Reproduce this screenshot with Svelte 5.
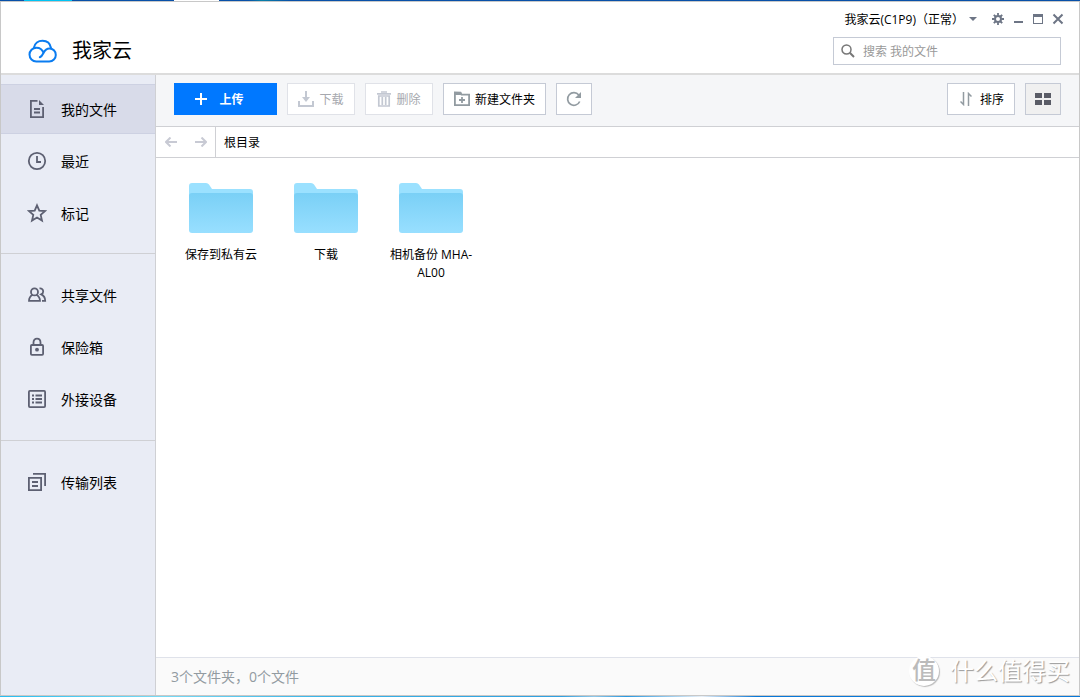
<script>
    let query = '';
    let current = '我的文件';

    const groups = [
        [
            { name: '我的文件', icon: 'file' },
            { name: '最近', icon: 'clock' },
            { name: '标记', icon: 'star' }
        ],
        [
            { name: '共享文件', icon: 'users' },
            { name: '保险箱', icon: 'lock' },
            { name: '外接设备', icon: 'device' }
        ],
        [{ name: '传输列表', icon: 'transfer' }]
    ];

    const folders = ['保存到私有云', '下载', '相机备份 MHA-AL00'];
</script>

<div class="desktop">
    <div class="window">
        <header>
            <div class="brand">
                <svg width="30" height="24" viewBox="0 0 30 24" fill="none" stroke="#0a7cf0" stroke-width="2" stroke-linecap="round">
                    <path d="M6 8.500C6.800 4.500 10.200 1.700 14.500 1.700s7.700 2.800 8.500 7.300" />
                    <path d="M15.500 13.800C14.300 10.600 11.800 8.700 8.500 8.700c-4 0-7 3-7 6.900 0 3.800 3 6.800 6.800 6.800h12.900c3.800 0 6.600-2.900 6.600-6.500 0-3.700-2.900-6.400-6.300-6.400-6.700 0-5 6.900-9.700 8.700" />
                </svg>
                <h1>我家云</h1>
            </div>
            <div class="tools">
                <div class="controls">
                    <button class="account">
                        我家云(C1P9)（正常）
                        <svg width="8" height="4" viewBox="0 0 8 4"><path d="M0 0h8L4 4z" fill="#6d7585" /></svg>
                    </button>
                    <button aria-label="设置">
                        <svg width="12" height="12" viewBox="0 0 12 12" fill="none" stroke="#6d7585">
                            <path d="M6 0v2.500M6 9.500V12M0 6h2.500M9.500 6H12M1.800 1.800l1.700 1.700M8.500 8.500l1.700 1.700M1.800 10.200l1.700-1.700M8.500 3.500l1.700-1.700" stroke-width="1.800" />
                            <circle cx="6" cy="6" r="3" stroke-width="2" />
                        </svg>
                    </button>
                    <button aria-label="最小化">
                        <svg width="12" height="12" viewBox="0 0 12 12"><path d="M2 8h9v2H2z" fill="#6d7585" /></svg>
                    </button>
                    <button aria-label="最大化">
                        <svg width="12" height="12" viewBox="0 0 12 12"><path d="M1 1h10v10H1zM2 4v6h8V4z" fill="#6d7585" fill-rule="evenodd" /></svg>
                    </button>
                    <button aria-label="关闭">
                        <svg width="12" height="12" viewBox="0 0 12 12"><path d="M1.500 1.500l9 9M10.500 1.500l-9 9" stroke="#6d7585" stroke-width="2" /></svg>
                    </button>
                </div>
                <label class="search">
                    <svg width="14" height="14" viewBox="0 0 14 14" fill="none" stroke="#777">
                        <circle cx="5.500" cy="5.500" r="4.500" stroke-width="1.500" />
                        <path d="M8.800 8.800L13 13" stroke-width="2" />
                    </svg>
                    <input type="text" aria-label="搜索" placeholder="搜索 我的文件" bind:value={query} />
                </label>
            </div>
        </header>

        <div class="body">
            <nav class="sidebar">
                {#each groups as group}
                    <ul>
                        {#each group as item}
                            <li>
                                <button class:active={current === item.name} on:click={() => (current = item.name)}>
                                    <svg width="20" height="20" viewBox="0 0 20 20" fill="none" stroke="#5d6072" stroke-width="1.800">
                                        {#if item.icon === 'file'}
                                            <path d="M10.500 1.900H3.900v16.200h12.200V8M7 10h6M7 13.500h6" />
                                            <path d="M12 1l5 5h-5z" fill="#5d6072" stroke="none" />
                                        {:else if item.icon === 'clock'}
                                            <circle cx="10" cy="10" r="8.200" />
                                            <path d="M10 5v6h4" />
                                        {:else if item.icon === 'star'}
                                            <path d="M10 2.300l2.300 5.300 5.700.5-4.300 3.800 1.300 5.700-5-3-5 3 1.300-5.700L2 8.100l5.700-.5z" />
                                        {:else if item.icon === 'users'}
                                            <circle cx="7.500" cy="6.900" r="3.500" />
                                            <path d="M5.600 9.800C3.500 11 2 12.500 2 15.900h11c0-3.400-1.500-4.900-3.600-6.100M12.500 3.400c2.300-.3 3.700 1.200 3.700 3 0 1.400-.8 2.400-2 3 2.300 1 4 3 4 6.500H15" />
                                        {:else if item.icon === 'lock'}
                                            <rect x="3.900" y="8" width="12.200" height="9.800" rx="1" />
                                            <path d="M6.500 8V5.500C6.500 3.200 8 1.700 10 1.700s3.500 1.500 3.500 3.800V8" />
                                            <circle cx="10" cy="12.700" r="1.900" fill="#5d6072" stroke="none" />
                                        {:else if item.icon === 'device'}
                                            <rect x="1.900" y="1.900" width="16.200" height="16.200" rx="1" />
                                            <path d="M5 6.500h2M8.500 6.500H15M5 10h2M8.500 10H15M5 13.500h2M8.500 13.500H15" />
                                        {:else}
                                            <path d="M1.900 5.900h12.200v12.200H1.900zM5 10h6M5 14h6M6 1.900h12.100V14" />
                                        {/if}
                                    </svg>
                                    {item.name}
                                </button>
                            </li>
                        {/each}
                    </ul>
                {/each}
            </nav>

            <main>
                <div class="toolbar">
                    <button class="btn wide primary">
                        <svg width="12" height="12" viewBox="0 0 12 12"><path d="M6 0v12M0 6h12" stroke="#fff" stroke-width="2" /></svg>
                        上传
                    </button>
                    <button class="btn" disabled>
                        <svg width="16" height="16" viewBox="0 0 16 16" fill="none" stroke="#c3c8d2" stroke-width="2">
                            <path d="M1 10v5h14v-5M8 0v8" />
                            <path d="M4 6h8l-4 5z" fill="#c3c8d2" stroke="none" />
                        </svg>
                        下载
                    </button>
                    <button class="btn" disabled>
                        <svg width="14" height="16" viewBox="0 0 14 16" fill="none" stroke="#c3c8d2" stroke-width="1.700">
                            <path d="M0 2.800h14M4 1h6M1.800 5v10h10.400V5zM5.300 6v8M8.700 6v8" />
                        </svg>
                        删除
                    </button>
                    <button class="btn wide">
                        <svg width="16" height="16" viewBox="0 0 16 16" fill="none" stroke="#929ba1" stroke-width="1.800">
                            <path d="M.9 1.500v12.600h14.200V3.700H7.500l-1-2z" />
                            <path d="M1 1h6l1 3H1z" fill="#929ba1" stroke="none" />
                            <path d="M8 6v6M5 9h6" />
                        </svg>
                        新建文件夹
                    </button>
                    <button class="btn square" aria-label="刷新">
                        <svg width="16" height="16" viewBox="0 0 16 16" fill="none" stroke="#929ba1" stroke-width="1.700">
                            <path d="M13.700 10.500A6.300 6.300 0 1 1 12.800 4" />
                            <path d="M15 1v6H9z" fill="#929ba1" stroke="none" />
                        </svg>
                    </button>
                    <span class="spacer"></span>
                    <button class="btn sort">
                        <svg width="12" height="14" viewBox="0 0 12 14" fill="none" stroke="#929ba1" stroke-width="1.500">
                            <path d="M3.500 0v12.500L.5 9.500M8.500 14V1.500l3 3" />
                        </svg>
                        排序
                    </button>
                    <button class="btn square view" aria-label="视图">
                        <svg width="16" height="12" viewBox="0 0 16 12"><path d="M0 0h7v5H0zM9 0h7v5H9zM0 7h7v5H0zM9 7h7v5H9z" fill="#5a5c66" /></svg>
                    </button>
                </div>

                <div class="path">
                    <div class="history">
                        <button aria-label="后退" disabled>
                            <svg width="12" height="10" viewBox="0 0 12 10" fill="none" stroke="#c8cad4" stroke-width="2"><path d="M12 5H1M5.500.5L1 5l4.500 4.500" /></svg>
                        </button>
                        <button aria-label="前进" disabled>
                            <svg width="12" height="10" viewBox="0 0 12 10" fill="none" stroke="#c8cad4" stroke-width="2"><path d="M0 5h11M6.500.5L11 5 6.500 9.500" /></svg>
                        </button>
                    </div>
                    <a href="#root">根目录</a>
                </div>

                <div class="files">
                    {#each folders as folder}
                        <button class="folder">
                            <svg width="64" height="50" viewBox="0 0 64 50">
                                <defs>
                                    <linearGradient id="front" x1="0" y1="0" x2="0" y2="1">
                                        <stop offset="0" stop-color="#7ad0f6" />
                                        <stop offset="1" stop-color="#98dfff" />
                                    </linearGradient>
                                </defs>
                                <path d="M0 3a3 3 0 0 1 3-3h14q2 0 3 1.500L23 6h38a3 3 0 0 1 3 3v12H0z" fill="#9be1ff" />
                                <path d="M0 13a3 3 0 0 1 3-3h58a3 3 0 0 1 3 3v34a3 3 0 0 1-3 3H3a3 3 0 0 1-3-3z" fill="url(#front)" />
                            </svg>
                            <span>{folder}</span>
                        </button>
                    {/each}
                </div>

                <footer>3个文件夹，0个文件</footer>
            </main>
        </div>
    </div>

    <div class="watermark">
        <span class="seal">值</span>
        <span>什么值得买</span>
    </div>
</div>

<style>
    :global(body) {
        font-family: "Open Sans", "Noto Sans CJK SC", sans-serif;
        font-size: 12px;
        color: #000;
    }

    .desktop {
        position: relative;
        display: flex;
        box-sizing: border-box;
        min-height: 100vh;
        padding: 1px 0;
        background:
            linear-gradient(90deg, #0850a8 24px, #00c4f4 24px 72px, #0850a8 72px 174px, #fff 174px 219px, #0850a8 219px 248px, #0880a8 262px, #0850a8 290px) top / 100% 1px no-repeat,
            linear-gradient(90deg, #28bdf0, #78daf4 15%, #38b4e8 30%, #30a0e0 52%, #90c8e8 55%, #2898e0 58%, #e8f0f8 65%, #0878d8 70%, #0878d8) bottom / 100% 1px no-repeat;
    }

    .window {
        flex: 1;
        display: flex;
        flex-direction: column;
        border: 1px solid #c8c8c8;
        background: #fff;
    }

    button,
    input {
        margin: 0;
        padding: 0;
        border: 0;
        background: none;
        font: inherit;
        color: inherit;
    }

    svg {
        display: block;
        flex: none;
    }

    header {
        display: flex;
        justify-content: space-between;
        padding: 8px 18px 8px 27px;
        border-bottom: 2px solid #dcdcdc;
    }

    .brand {
        display: flex;
        align-items: center;
        align-self: flex-end;
        gap: 14px;
    }

    h1 {
        margin: 0;
        font-size: 20px;
        line-height: 28px;
        font-weight: 400;
    }

    .tools {
        display: flex;
        flex-direction: column;
        align-items: flex-end;
        gap: 9px;
    }

    .controls {
        display: flex;
        align-items: center;
        gap: 8px;
        height: 18px;
        margin-right: -3px;
    }

    .account {
        display: flex;
        align-items: center;
        gap: 5px;
        margin-right: 7px;
    }

    .search {
        display: flex;
        align-items: center;
        gap: 8px;
        box-sizing: border-box;
        width: 228px;
        height: 28px;
        padding: 0 7px;
        border: 1px solid #c5cad5;
    }

    .search input {
        flex: 1;
        min-width: 0;
        outline: none;
    }

    .search input::placeholder {
        color: #999;
        opacity: 1;
    }

    .body {
        flex: 1;
        display: flex;
    }

    .sidebar {
        width: 154px;
        border-right: 1px solid #cfd0d4;
        background: #e9ecf5;
    }

    ul {
        display: flex;
        flex-direction: column;
        gap: 2px;
        margin: 0;
        padding: 16px 0;
        list-style: none;
    }

    ul:first-child {
        padding: 9px 0 15px;
    }

    ul + ul {
        border-top: 1px solid #cfd0d4;
    }

    .sidebar button {
        display: flex;
        align-items: center;
        gap: 14px;
        box-sizing: border-box;
        width: 100%;
        height: 50px;
        padding-left: 26px;
        border: solid transparent;
        border-width: 1px 0;
        font-size: 14px;
    }

    .sidebar .active {
        border-color: #cdd1e2;
        background: #d8dbe9;
    }

    main {
        flex: 1;
        display: flex;
        flex-direction: column;
    }

    .toolbar {
        display: flex;
        gap: 10px;
        padding: 8px 18px 11px;
        border-bottom: 1px solid #cfd0d4;
        background: #f5f6f8;
    }

    .btn {
        display: flex;
        align-items: center;
        justify-content: center;
        gap: 5px;
        box-sizing: border-box;
        width: 68px;
        height: 32px;
        border: 1px solid #c5cad5;
        background: #fff;
    }

    .btn:disabled {
        border-color: #e0e2e8;
        color: #a6a8ae;
    }

    .wide {
        width: 103px;
    }

    .square {
        width: 36px;
    }

    .primary {
        gap: 12px;
        padding-right: 12px;
        border-color: #0078ff;
        background: #0078ff;
        color: #fff;
        font-weight: 600;
    }

    .sort {
        gap: 8px;
        padding-left: 2px;
    }

    .view {
        background: #f0f0f0;
    }

    .spacer {
        flex: 1;
    }

    .path {
        display: flex;
        align-items: center;
        height: 30px;
        border-bottom: 1px solid #cfd0d4;
    }

    .history {
        display: flex;
        align-items: center;
        gap: 18px;
        height: 100%;
        padding: 0 8px 0 9px;
        border-right: 1px solid #cfd0d4;
    }

    .path a {
        padding-left: 8px;
        color: inherit;
        text-decoration: none;
    }

    .files {
        flex: 1;
        display: flex;
        flex-wrap: wrap;
        align-content: flex-start;
        align-items: flex-start;
        gap: 15px;
        padding: 25px 20px;
    }

    .folder {
        display: flex;
        flex-direction: column;
        align-items: center;
        gap: 13px;
        width: 90px;
        line-height: 18px;
    }

    footer {
        padding: 0 15px;
        border-top: 1px solid #dfe2ea;
        background: #fafafa;
        color: #929ba1;
        font-size: 14px;
        line-height: 37px;
    }

    .watermark {
        position: absolute;
        right: 10px;
        bottom: 8px;
        display: flex;
        align-items: center;
        gap: 11px;
        color: #fff;
        font-size: 24px;
        line-height: 36px;
        text-shadow: 1px 1px 1px #999;
        pointer-events: none;
    }

    .seal {
        width: 30px;
        height: 30px;
        border-radius: 50%;
        background: #fff;
        box-shadow: 1px 1px 1px #bbb;
        color: #bbb;
        font-size: 24px;
        font-weight: 500;
        line-height: 28px;
        text-align: center;
        text-shadow: none;
    }
</style>
